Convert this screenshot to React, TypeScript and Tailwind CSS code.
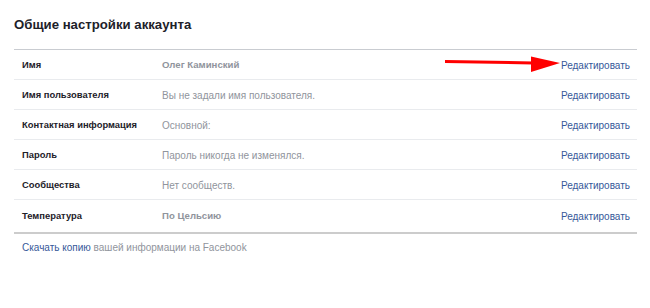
const rows = [
  { label: 'Имя', value: 'Олег Каминский', bold: true },
  { label: 'Имя пользователя', value: 'Вы не задали имя пользователя.' },
  { label: 'Контактная информация', value: 'Основной:' },
  { label: 'Пароль', value: 'Пароль никогда не изменялся.' },
  { label: 'Сообщества', value: 'Нет сообществ.' },
  { label: 'Температура', value: 'По Цельсию', bold: true },
]

const Arrow = () => (
  <svg
    className="absolute left-[445px] top-[55px]"
    width="118"
    height="20"
    viewBox="0 0 118 20"
  >
    <path d="M0 6.5 L88 8" stroke="#f00" strokeWidth="3" />
    <path d="M86 1.5 L115 8 L86 17 Z" fill="#f00" />
  </svg>
)

const App = () => {
  return (
    <div className="relative w-[650px] h-[308px] bg-white font-['Liberation_Sans',Arial,sans-serif]">
      <div className="pl-[14px] w-[637px]">
        <div className="h-[49px] pt-[17px]">
          <h2 className="text-[13.2px] leading-[16px] font-bold text-[#1d2129]">
            Общие настройки аккаунта
          </h2>
        </div>
        <div className="border-t border-[#c9ccd1]">
          {rows.map((row, i) => (
            <div
              key={row.label}
              className={
                i === rows.length - 1
                  ? 'flex items-center h-[34px] pt-[1px] pl-[8px] pr-[7px] border-b-2 border-[#cccccc] text-[10px]'
                  : 'flex items-center h-[30px] pt-[1px] pl-[8px] pr-[7px] border-b border-[#e9ebee] text-[10px]'
              }
            >
              <span className="w-[140px] text-[9.4px] font-bold text-[#1d2129]">{row.label}</span>
              <span
                className={
                  row.bold ? 'flex-1 text-[9.6px] font-bold text-[#90949c]' : 'flex-1 text-[#90949c]'
                }
              >
                {row.value}
              </span>
              <a className="text-[#365899]">Редактировать</a>
            </div>
          ))}
        </div>
        <div className="pl-[8px] pt-[7px] text-[10px] leading-[13px]">
          <a className="text-[#365899]">Скачать копию</a>
          <span className="text-[#90949c]"> вашей информации на Facebook</span>
        </div>
      </div>
      <Arrow />
    </div>
  )
}

export default App
